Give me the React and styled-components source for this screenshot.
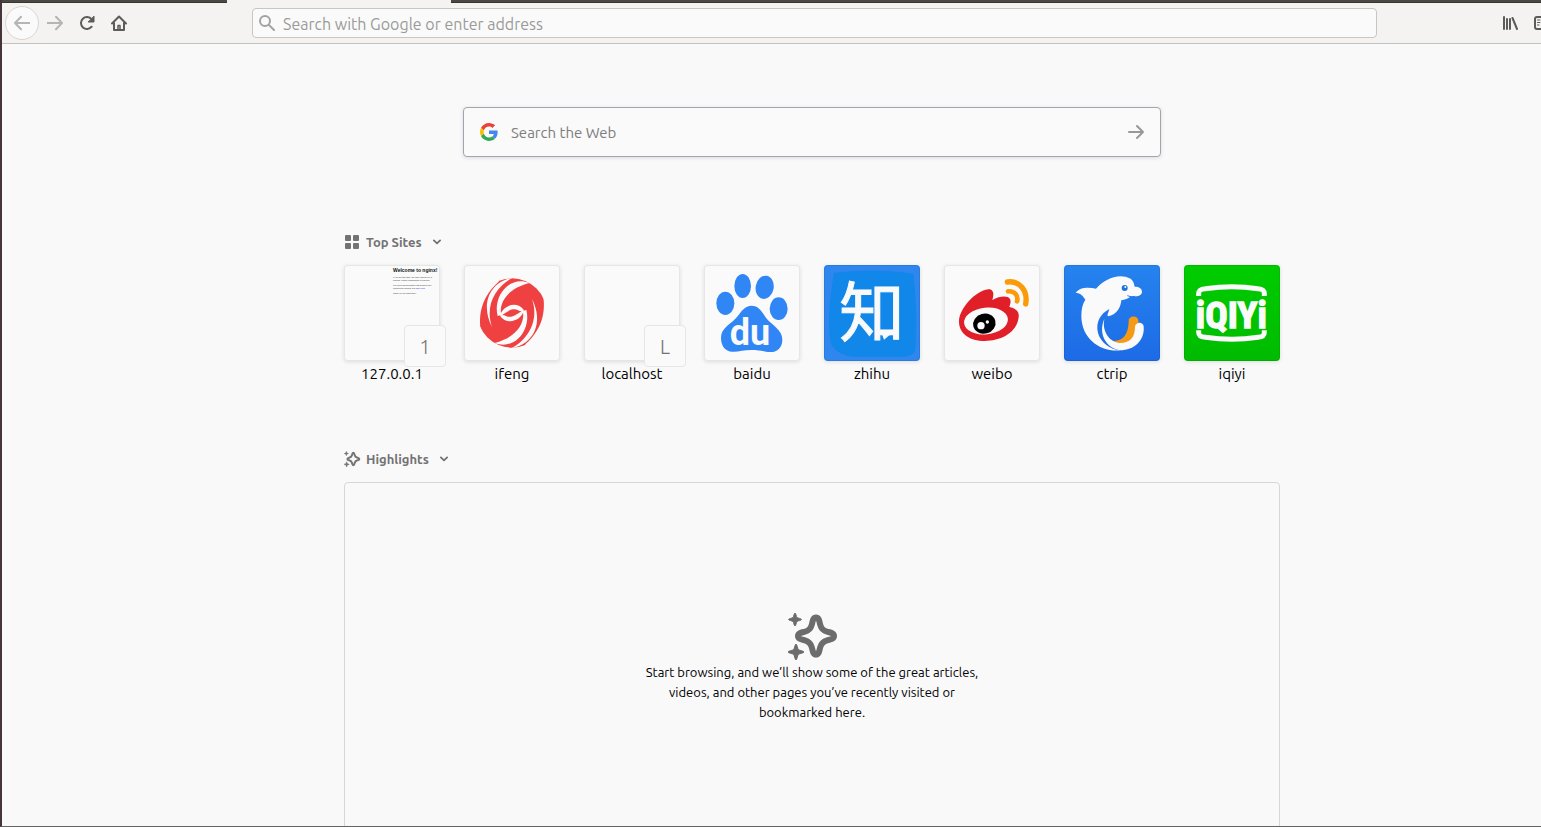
import React from "react";
import styled, { createGlobalStyle, css } from "styled-components";

const uiFont = `Ubuntu, "Noto Sans", "Open Sans", sans-serif`;

const GlobalStyle = createGlobalStyle`
  *, *::before, *::after { box-sizing: border-box; }
  body {
    margin: 0;
    overflow: hidden;
    background: #f9f9fa;
    font-family: ${uiFont};
  }
`;

const Desktop = styled.div`
  height: 100vh;
  overflow: hidden;
  border-left: 2px solid #46343c;
  border-bottom: 1px solid #636363;
`;

/* The browser window runs past the right edge of the visible desktop. */
const BrowserWindow = styled.div`
  width: calc(100% + 81px);
  display: flex;
  flex-direction: column;
`;

const TabStrip = styled.div`
  display: flex;
  height: 3px;
  padding-left: 225px;
  background: #4a4843;
  border-bottom: 1px solid #383631;
`;

const ActiveTab = styled.div`
  width: 224px;
  height: 3px;
  background: #f4f3f1;
`;

const Toolbar = styled.nav`
  display: flex;
  align-items: center;
  height: 41px;
  padding: 0 64px 0 3px;
  background: #f4f3f1;
  border-bottom: 1px solid #c3c2be;
`;

const ToolButton = styled.button`
  display: grid;
  place-items: center;
  width: 32px;
  height: 32px;
  padding: 0;
  border: 0;
  background: none;
  color: ${(p) => (p.disabled ? "#b6b5b3" : "#5b5b5a")};

  ${(p) =>
    p.$round &&
    css`
      width: 34px;
      height: 34px;
      border: 1px solid #d9d6d3;
      border-radius: 50%;
      background: #fafafa;
    `}
`;

const FlexSpace = styled.div`
  flex: 0 0 117px;
`;

const AddressBar = styled.label`
  flex: 1;
  display: flex;
  align-items: center;
  gap: 8px;
  height: 30px;
  padding: 0 6px;
  border: 1px solid #cbc5c1;
  border-radius: 4px;
  background: #fafafa;
  color: #a3a3a3;
`;

const TextInput = styled.input`
  flex: 1;
  min-width: 0;
  padding: 2px 0 0;
  border: 0;
  outline: 0;
  background: none;
  color: #0c0c0d;
  font: ${(p) => p.$size}px/20px ${uiFont};

  &::placeholder {
    color: ${(p) => p.$placeholder};
    opacity: 1;
  }
`;

const Page = styled.main`
  display: flex;
  flex-direction: column;
  width: 936px;
  margin: 0 auto;
  padding-top: 63px;
`;

const SearchBox = styled.form`
  display: flex;
  align-items: center;
  gap: 13px;
  align-self: center;
  width: 698px;
  height: 50px;
  margin-bottom: 75px;
  padding: 0 16px;
  border: 1px solid #a5a4ae;
  border-radius: 4px;
  background: #fafafa;
  box-shadow: 0 1px 4px rgba(12, 12, 13, 0.12);
`;

const SearchSubmit = styled.button`
  display: grid;
  place-items: center;
  padding: 0;
  border: 0;
  background: none;
  color: #989898;
`;

const Section = styled.section`
  display: flex;
  flex-direction: column;
  margin-bottom: ${(p) => p.$after || 0}px;
`;

const SectionTitle = styled.h2`
  margin: 0 0 13px;
  font-size: 13px;
  line-height: 20px;
`;

const SectionToggle = styled.button`
  display: flex;
  align-items: center;
  gap: 6px;
  padding: 0;
  border: 0;
  background: none;
  color: #737373;
  font: inherit;

  svg:last-child { margin-left: 5px; }
`;

const SiteList = styled.ul`
  display: flex;
  gap: 24px;
  margin: 0;
  padding: 0;
  list-style: none;
`;

const SiteLink = styled.a`
  display: block;
  width: 96px;
  color: #000;
  font-size: 15px;
  line-height: 26px;
  text-align: center;
  text-decoration: none;
`;

const Tile = styled.span`
  position: relative;
  display: block;
  width: 96px;
  height: 96px;
  border-radius: 4px;
  background: ${(p) => p.$fill || "#fafafa"};
  box-shadow: inset 0 0 0 1px rgba(0, 0, 0, 0.08), 0 1px 4px rgba(12, 12, 13, 0.12);

  svg { display: block; overflow: visible; }
`;

const Badge = styled.span`
  position: absolute;
  right: -6px;
  bottom: -6px;
  display: grid;
  place-items: center;
  width: 42px;
  height: 42px;
  padding-top: 2px;
  border: 1px solid #e6e6e6;
  border-radius: 4px;
  background: #fafafa;
  color: #737373;
  font-size: 20px;
  font-weight: 300;
`;

const Preview = styled.span`
  display: block;
  height: 96px;
  padding: 2px 0 0 49px;
  color: #333;
  font: 2px/3px "Liberation Sans", sans-serif;
  text-align: left;
  white-space: nowrap;
`;

const PreviewHeading = styled.span`
  display: block;
  margin-bottom: 2px;
  color: #111;
  font-size: 5px;
  font-weight: 700;
  line-height: 7px;
`;

const PreviewLine = styled.span`
  display: block;
  margin-bottom: ${(p) => (p.$last ? 2 : 0)}px;
`;

const PreviewLink = styled.span`
  color: #22e;
`;

const EmptyCard = styled.div`
  display: flex;
  flex-direction: column;
  align-items: center;
  gap: 2px;
  height: 380px;
  padding-top: 129px;
  border: 1px solid #d7d7db;
  border-radius: 4px;
  color: #6c6c6c;
`;

const EmptyText = styled.p`
  width: 346px;
  margin: 0;
  color: #000;
  font-size: 13px;
  line-height: 20px;
  text-align: center;
`;

const Line = ({ size = 16, w = 2, box = "0 0 16 16", children }) => (
  <svg width={size} height={size} viewBox={box} fill="none" stroke="currentColor"
    strokeWidth={w} strokeLinecap="round" strokeLinejoin="round" aria-hidden="true">
    {children}
  </svg>
);

const BackIcon = () => <Line w={2}><path d="M15.5 8H1M7 1.8 1 8l6 6.2" /></Line>;
const ForwardIcon = () => <Line w={2}><path d="M.5 8H15M9 1.8 15 8l-6 6.2" /></Line>;
const GoIcon = () => <Line w={2}><path d="M1 8h14M9 2l6 6-6 6" /></Line>;
const ReloadIcon = () => (
  <Line w={2}>
    <path d="M12.7 11.7A6 6 0 1 1 12.6 4.2" />
    <path d="M15 1.5V7H9.5z" fill="currentColor" strokeWidth="1" />
  </Line>
);
const HomeIcon = () => (
  <Line w={2}>
    <path d="M1 8.5 8 1.5l7 7M3 8v7h10V8" />
    <path d="M7 14v-3.500h2V14" strokeWidth="1.500" />
  </Line>
);
const GlassIcon = () => <Line w={2}><circle cx="6" cy="6" r="5" /><path d="m10 10 5 5" /></Line>;
const LibraryIcon = () => (
  <Line w={2}><path d="M2 2v12M5 4v10M8 4v10" /><path d="m10.500 3 4.500 11" /></Line>
);
const SidebarIcon = () => (
  <Line w={2}>
    <rect x="1" y="2" width="14" height="12" rx="2" />
    <path d="M8 2v12" /><path d="M3.500 5H6M3.500 7.500H6M3.500 10H5" strokeWidth="1" />
  </Line>
);
const ChevronIcon = () => <Line size={8} w={1.8} box="0 0 8 8"><path d="m.9 2.400 3.100 3 3.100-3" /></Line>;
const GridIcon = () => (
  <svg width="16" height="16" viewBox="0 0 16 16" fill="currentColor" aria-hidden="true">
    <rect x="1" y="1" width="6" height="6" rx="1" /><rect x="9" y="1" width="6" height="6" rx="1" />
    <rect x="1" y="9" width="6" height="6" rx="1" /><rect x="9" y="9" width="6" height="6" rx="1" />
  </svg>
);
const SparkleIcon = ({ size = 16 }) => (
  <svg width={size} height={size} viewBox="0 0 48 48" fill="currentColor" overflow="visible" aria-hidden="true">
    <path d="M28 5.500c3 0 3.200 3.500 4.300 7.500 1 3.700 3 5.700 6.700 6.700 4 1 7 1.300 7 4.300s-3 3.300-7 4.300c-3.700 1-5.700 3-6.700 6.700-1.100 4-1.300 7.500-4.300 7.500s-3.200-3.500-4.300-7.500c-1-3.700-3-5.700-6.700-6.700-4-1-7-1.300-7-4.300s3-3.300 7-4.300c3.700-1 5.700-3 6.700-6.700 1.100-4 1.300-7.500 4.300-7.500z" fill="none" stroke="currentColor" strokeWidth="6" />
    <path d="M7 1c.9 0 1.200 3.800 2 4.500S13.500 6.600 13.500 7.500 9.800 8.700 9 9.500 7.900 14 7 14s-1.200-3.800-2-4.500S.5 8.400.5 7.500 4.200 6.300 5 5.500 6.100 1 7 1zM8 32c1 0 1.400 4.400 2.400 5.500S16 39 16 40s-4.500 1.400-5.600 2.500S9 48 8 48s-1.400-4.500-2.400-5.500S0 41 0 40s4.500-1.400 5.600-2.500S7 32 8 32z" stroke="currentColor" strokeWidth="1" />
  </svg>
);
const GoogleIcon = () => (
  <svg width="18" height="18" viewBox="0 0 48 48" aria-hidden="true">
    <path fill="#ea4335" d="M24 9.500c3.540 0 6.710 1.220 9.210 3.600l6.850-6.850C35.900 2.380 30.470 0 24 0 14.620 0 6.510 5.380 2.560 13.220l7.980 6.190C12.430 13.720 17.740 9.500 24 9.500z" />
    <path fill="#4285f4" d="M46.980 24.550c0-1.570-.15-3.090-.38-4.550H24v9.020h12.940c-.58 2.960-2.260 5.480-4.780 7.180l7.730 6c4.510-4.180 7.090-10.360 7.090-17.650z" />
    <path fill="#fbbc05" d="M10.530 28.590c-.48-1.450-.76-2.990-.76-4.590s.27-3.140.76-4.590l-7.980-6.190C.92 16.460 0 20.120 0 24s.92 7.540 2.560 10.780z" />
    <path fill="#34a853" d="M24 48c6.480 0 11.930-2.130 15.890-5.810l-7.730-6c-2.150 1.450-4.920 2.300-8.160 2.300-6.260 0-11.570-4.220-13.470-9.910l-7.980 6.190C6.510 42.620 14.620 48 24 48z" />
  </svg>
);

const Logo = ({ children }) => (
  <svg width="96" height="96" viewBox="0 0 288 288" aria-hidden="true">{children}</svg>
);

const swirl = (
  <g fill="#fafafa">
    <path d="M196 54C134 30 86 96 101 153l11-3C104 120 124 72 196 54z" />
    <path d="M146 38C78 50 48 116 84 186 62 122 94 66 146 38z" />
    <path d="M104 38C26 70 16 140 52 204 40 146 56 92 104 50z" />
    <path d="M108 152c8-32 52-46 72-16l-4 2c-12 2-16-8-30-5-18 4-24 15-38 19z" />
  </g>
);
const IfengLogo = () => (
  <Logo>
    <circle cx="144" cy="144" r="104" fill="#f04142" />
    {swirl}
    <g transform="rotate(180 144 144)">{swirl}</g>
  </Logo>
);
const BaiduLogo = () => (
  <Logo>
    <g fill="#3086f5">
      <ellipse cx="64" cy="115" rx="27" ry="35" />
      <ellipse cx="116" cy="63" rx="25" ry="36" />
      <ellipse cx="182" cy="67" rx="27" ry="35" transform="rotate(10 182 67)" />
      <ellipse cx="224" cy="131" rx="27" ry="34" />
      <path d="M143 122c22 0 30 18 44 38 16 20 48 34 48 64 0 24-16 38-36 37-20-1-32-6-56-6s-40 6-58 5c-22-1-34-18-34-42 0-30 30-40 48-62 14-18 24-34 44-34z" />
    </g>
    <text x="77" y="239" fill="#fafafa" fontFamily="Roboto, sans-serif" fontWeight="700" fontSize="108">du</text>
  </Logo>
);
const ZhihuLogo = () => (
  <Logo>
    <path fill="#1287ea" d="M30 24Q140 8 268 26q14 110 6 230-6 20-40 20H90Q40 270 22 240 4 170 30 24z" />
    <text x="46" y="214" fill="#fafafa" fontFamily='"Noto Sans CJK SC", sans-serif' fontWeight="400"
      fontSize="196" stroke="#fafafa" strokeWidth="3">知</text>
    <path fill="#fafafa" d="M170 196h44l-34 28z" />
  </Logo>
);
const WeiboLogo = () => (
  <Logo>
    <path fill="#e01f28" d="M45 170c0-38 48-92 88-97 16 0 18 14 12 32 22-12 46-14 53-3 4 8 0 16-2 24 20 4 30 14 28 30-4 46-52 72-102 72-44 0-77-22-77-58z" />
    <ellipse cx="126" cy="168" rx="66" ry="40" fill="#fafafa" transform="rotate(-6 126 168)" />
    <ellipse cx="121" cy="176" rx="34" ry="30" fill="#000" transform="rotate(-15 121 176)" />
    <circle cx="111" cy="182" r="11" fill="#fafafa" /><circle cx="130" cy="171" r="5" fill="#fafafa" />
    <g fill="none" stroke="#fb9b0a" strokeLinecap="round">
      <path strokeWidth="16" d="M190 51c38-6 62 28 55 66" />
      <path strokeWidth="14" d="M192 79c20-2 32 14 27 30" />
    </g>
  </Logo>
);
const CtripLogo = () => (
  <Logo>
    <path fill="#fafafa" d="M35 83C48 66 74 66 96 71c28-32 70-48 104-30 8 6 10 14 12 24 14 0 22 6 22 15 0 12-16 16-34 14-8 8-18 10-28 12-2 22-14 44-40 48-4-4 2-12 4-22-26 14-42 38-34 72 8 28 36 50 68 52-60 6-118-34-118-104 0-20 4-36 12-48-8-12-14-20-29-21z" />
    <path fill="#f69a16" d="M194 168c0-18 28-18 29-2 2 30-4 60-40 70-16 4-34 0-42-8 30 2 52-12 53-60z" />
    <path fill="#fafafa" d="M121 162c-8 40 18 70 46 72 34 0 46-18 46-50 4-14 24-14 26 0 4 44-30 72-70 72-42-6-68-50-48-94z" />
    <circle cx="182" cy="69" r="9" fill="#1f72d8" /><circle cx="184" cy="66" r="3" fill="#fafafa" />
    <path d="M190 92q12 6 24 2" fill="none" stroke="#247be9" strokeWidth="3" />
  </Logo>
);
const IqiyiLogo = () => (
  <Logo>
    <g fill="none" stroke="#fafafa" strokeWidth="15">
      <path d="M44 93V86c0-10 6-14 20-15 50-7 110-7 158 0 14 1 19 5 19 15v7" />
      <path d="M44 196v6c0 10 6 14 20 15 50 7 110 7 158 0 14-1 19-5 19-15v-6" />
    </g>
    <text x="142" y="188" textAnchor="middle" fill="#fafafa" stroke="#fafafa" strokeWidth="4"
      fontFamily='"Liberation Sans Narrow", "Roboto Condensed", "DejaVu Sans Condensed", sans-serif'
      fontWeight="700" fontSize="112">iQIYi</text>
  </Logo>
);

const NginxPreview = () => (
  <Preview aria-hidden="true">
    <PreviewHeading>Welcome to nginx!</PreviewHeading>
    <PreviewLine>If you see this page, the nginx web server is</PreviewLine>
    <PreviewLine $last>working. Further configuration is required.</PreviewLine>
    <PreviewLine>For online documentation and support refer</PreviewLine>
    <PreviewLine $last>Commercial support is at <PreviewLink>nginx.com.</PreviewLink></PreviewLine>
    <PreviewLine>Thank you for using nginx.</PreviewLine>
  </Preview>
);

const sites = [
  { name: "127.0.0.1", art: <NginxPreview />, badge: "1" },
  { name: "ifeng", art: <IfengLogo /> },
  { name: "localhost", badge: "L" },
  { name: "baidu", art: <BaiduLogo /> },
  { name: "zhihu", art: <ZhihuLogo />, fill: "#2f86ee" },
  { name: "weibo", art: <WeiboLogo /> },
  { name: "ctrip", art: <CtripLogo />, fill: "linear-gradient(#2583ee, #1d6be6)" },
  { name: "iqiyi", art: <IqiyiLogo />, fill: "linear-gradient(#00cc00, #00bb00)" },
];

export default function App() {
  return (
    <Desktop>
      <GlobalStyle />
      <BrowserWindow>
        <TabStrip><ActiveTab /></TabStrip>
        <Toolbar aria-label="Navigation">
          <ToolButton $round disabled aria-label="Back"><BackIcon /></ToolButton>
          <ToolButton disabled aria-label="Forward"><ForwardIcon /></ToolButton>
          <ToolButton aria-label="Reload"><ReloadIcon /></ToolButton>
          <ToolButton aria-label="Home"><HomeIcon /></ToolButton>
          <FlexSpace />
          <AddressBar>
            <GlassIcon />
            <TextInput $size={16} $placeholder="#9b9a99" aria-label="Address" placeholder="Search with Google or enter address" />
          </AddressBar>
          <FlexSpace />
          <ToolButton aria-label="Library"><LibraryIcon /></ToolButton>
          <ToolButton aria-label="Sidebars"><SidebarIcon /></ToolButton>
        </Toolbar>
        <Page>
          <SearchBox role="search">
            <GoogleIcon />
            <TextInput $size={15} $placeholder="#7d7d7d" aria-label="Search the Web" placeholder="Search the Web" />
            <SearchSubmit type="button" aria-label="Search"><GoIcon /></SearchSubmit>
          </SearchBox>
          <Section $after={62}>
            <SectionTitle>
              <SectionToggle><GridIcon />Top Sites<ChevronIcon /></SectionToggle>
            </SectionTitle>
            <SiteList>
              {sites.map((s) => (
                <li key={s.name}>
                  <SiteLink href={`#${s.name}`}>
                    <Tile $fill={s.fill}>
                      {s.art}
                      {s.badge && <Badge aria-hidden="true">{s.badge}</Badge>}
                    </Tile>
                    {s.name}
                  </SiteLink>
                </li>
              ))}
            </SiteList>
          </Section>
          <Section>
            <SectionTitle>
              <SectionToggle><SparkleIcon />Highlights<ChevronIcon /></SectionToggle>
            </SectionTitle>
            <EmptyCard>
              <SparkleIcon size={48} />
              <EmptyText>
                Start browsing, and we’ll show some of the great articles, videos, and other pages
                you’ve recently visited or bookmarked here.
              </EmptyText>
            </EmptyCard>
          </Section>
        </Page>
      </BrowserWindow>
    </Desktop>
  );
}
